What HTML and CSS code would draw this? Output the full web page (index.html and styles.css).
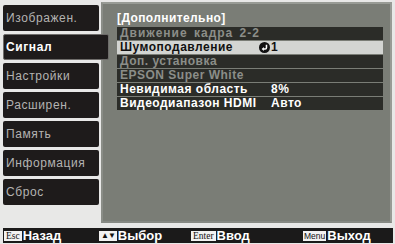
FILE: index.html
```html
<!DOCTYPE html>
<html>
<head>
<meta charset="utf-8">
<link rel="stylesheet" href="styles.css">
</head>
<body>
<div class="screen">
  <div class="main">
    <div class="menu">
      <div class="btn">Изображен.</div>
      <div class="btn sel">Сигнал</div>
      <div class="btn">Настройки</div>
      <div class="btn">Расширен.</div>
      <div class="btn">Память</div>
      <div class="btn">Информация</div>
      <div class="btn">Сброс</div>
    </div>
    <div class="panel">
      <div class="head">[Дополнительно]</div>
      <div class="rows">
        <div class="row dis"><span class="lbl wide">Движение кадра 2-2</span><span class="ico"></span><span class="val"></span></div>
        <div class="row hi"><span class="lbl">Шумоподавление</span><span class="ico"><svg width="11" height="11" viewBox="0 0 10 10"><circle cx="5" cy="5" r="5" fill="#111"/><path d="M6.8 2.4 V5.2 Q6.8 6.4 5.6 6.4 H3.6" fill="none" stroke="#fff" stroke-width="1.4"/><path d="M4.4 4.6 L2.4 6.4 L4.4 8.2 Z" fill="#fff"/></svg></span><span class="val">1</span></div>
        <div class="row dis"><span class="lbl">Доп. установка</span><span class="ico"></span><span class="val"></span></div>
        <div class="row dis"><span class="lbl">EPSON Super White</span><span class="ico"></span><span class="val"></span></div>
        <div class="row"><span class="lbl">Невидимая область</span><span class="ico"></span><span class="val">8%</span></div>
        <div class="row"><span class="lbl">Видеодиапазон HDMI</span><span class="ico"></span><span class="val">Авто</span></div>
      </div>
    </div>
  </div>
  <div class="bar">
    <div class="item w1"><span class="key serif">Esc</span><span class="txt">Назад</span></div>
    <div class="item w2"><span class="key arrows">▲▼</span><span class="txt">Выбор</span></div>
    <div class="item w3"><span class="key serif">Enter</span><span class="txt">Ввод</span></div>
    <div class="item"><span class="key">Menu</span><span class="txt">Выход</span></div>
  </div>
</div>
</body>
</html>
```
FILE: styles.css
```css
html, body {
  margin: 0;
  padding: 0;
}
body {
  width: 395px;
  height: 244px;
  background: #e8e8e7;
  font-family: "Liberation Sans", Arial, sans-serif;
  overflow: hidden;
}
.screen {
  padding-top: 2px;
}
.main {
  display: flex;
  align-items: flex-start;
}
.menu {
  width: 96px;
  margin-left: 3px;
  padding-top: 3px;
  display: flex;
  flex-direction: column;
  gap: 3px;
}
.btn {
  width: 96px;
  height: 26px;
  box-sizing: border-box;
  background: #1e1b1b;
  border-radius: 2px;
  padding-left: 3px;
  color: #b4b3b2;
  font-size: 12px;
  letter-spacing: 0.6px;
  line-height: 26px;
  white-space: nowrap;
}
.btn.sel {
  width: 106px;
  position: relative;
  z-index: 1;
  color: #fff;
  font-weight: bold;
  border: 1px solid #6e6c6a;
  line-height: 24px;
  padding-left: 2px;
}
.panel {
  margin-left: 2px;
  width: 291px;
  height: 221px;
  box-sizing: border-box;
  background: #7a7d76;
  border: 2px solid #989b95;
  border-left-color: #8a8d87;
  border-bottom-color: #868983;
  padding: 7px 7px 0 14px;
}
.head {
  color: #fff;
  font-weight: bold;
  font-size: 12px;
  letter-spacing: 0.4px;
  line-height: 14px;
  height: 14px;
  margin-bottom: 2px;
}
.rows {
  display: flex;
  flex-direction: column;
  gap: 1px;
}
.row {
  height: 13px;
  background: #2b2c28;
  color: #fff;
  font-weight: bold;
  font-size: 12px;
  letter-spacing: 0.5px;
  line-height: 13px;
  display: grid;
  grid-template-columns: 142px 11px 1fr;
  white-space: nowrap;
}
.row .lbl {
  padding-left: 3px;
}
.row .lbl.wide {
  letter-spacing: 1px;
  word-spacing: 2px;
}
.row.dis {
  color: #8c8e89;
}
.row.hi {
  background: #d3d5d2;
  color: #111;
}
.ico {
  display: flex;
  align-items: center;
}
.val {
  padding-left: 1px;
}
.bar {
  margin: 5px 2px 0 3px;
  height: 15px;
  background: #1b1a1a;
  display: flex;
  align-items: center;
}
.item {
  display: flex;
  align-items: center;
}
.w1 { width: 95px; }
.w2 { width: 92px; }
.w3 { width: 112px; }
.item:first-child { margin-left: 1px; }
.key {
  background: #f2f2f2;
  color: #111;
  height: 10px;
  line-height: 10px;
  font-size: 8.5px;
  padding: 0 1px;
  margin-right: 1px;
  font-family: "Liberation Sans", Arial, sans-serif;
}
.key.serif {
  font-family: "Liberation Serif", "Times New Roman", serif;
  font-size: 9.5px;
  padding: 0 2px;
}
.key.arrows {
  font-size: 8px;
  letter-spacing: -1px;
  padding: 0 2px 0 2px;
}
.txt {
  color: #fff;
  font-weight: bold;
  font-size: 13px;
  letter-spacing: 0;
  line-height: 15px;
}
```
